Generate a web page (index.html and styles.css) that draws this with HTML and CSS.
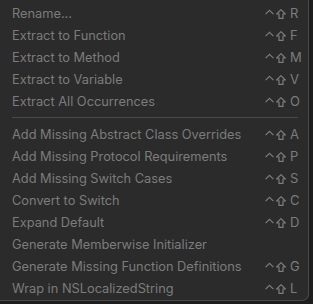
FILE: index.html
```html
<!DOCTYPE html>
<html>
<head>
<meta charset="utf-8">
<link rel="stylesheet" href="styles.css">
</head>
<body>
<div class="menu">
  <div class="group">
    <div class="item"><span class="label">Rename...</span><span class="key"><svg class="ctrl" viewBox="0 0 9 10"><polyline points="0.6,5.2 4.5,1.3 8.4,5.2"/></svg><svg class="shift" viewBox="0 0 10 10"><path d="M5 0.7 L9.3 5 H7 V9.4 H3 V5 H0.7 Z"/></svg><span class="k">R</span></span></div>
    <div class="item"><span class="label">Extract to Function</span><span class="key"><svg class="ctrl" viewBox="0 0 9 10"><polyline points="0.6,5.2 4.5,1.3 8.4,5.2"/></svg><svg class="shift" viewBox="0 0 10 10"><path d="M5 0.7 L9.3 5 H7 V9.4 H3 V5 H0.7 Z"/></svg><span class="k">F</span></span></div>
    <div class="item"><span class="label">Extract to Method</span><span class="key"><svg class="ctrl" viewBox="0 0 9 10"><polyline points="0.6,5.2 4.5,1.3 8.4,5.2"/></svg><svg class="shift" viewBox="0 0 10 10"><path d="M5 0.7 L9.3 5 H7 V9.4 H3 V5 H0.7 Z"/></svg><span class="k">M</span></span></div>
    <div class="item"><span class="label">Extract to Variable</span><span class="key"><svg class="ctrl" viewBox="0 0 9 10"><polyline points="0.6,5.2 4.5,1.3 8.4,5.2"/></svg><svg class="shift" viewBox="0 0 10 10"><path d="M5 0.7 L9.3 5 H7 V9.4 H3 V5 H0.7 Z"/></svg><span class="k">V</span></span></div>
    <div class="item"><span class="label">Extract All Occurrences</span><span class="key"><svg class="ctrl" viewBox="0 0 9 10"><polyline points="0.6,5.2 4.5,1.3 8.4,5.2"/></svg><svg class="shift" viewBox="0 0 10 10"><path d="M5 0.7 L9.3 5 H7 V9.4 H3 V5 H0.7 Z"/></svg><span class="k">O</span></span></div>
  </div>
  <div class="sep"></div>
  <div class="group">
    <div class="item"><span class="label">Add Missing Abstract Class Overrides</span><span class="key"><svg class="ctrl" viewBox="0 0 9 10"><polyline points="0.6,5.2 4.5,1.3 8.4,5.2"/></svg><svg class="shift" viewBox="0 0 10 10"><path d="M5 0.7 L9.3 5 H7 V9.4 H3 V5 H0.7 Z"/></svg><span class="k">A</span></span></div>
    <div class="item"><span class="label">Add Missing Protocol Requirements</span><span class="key"><svg class="ctrl" viewBox="0 0 9 10"><polyline points="0.6,5.2 4.5,1.3 8.4,5.2"/></svg><svg class="shift" viewBox="0 0 10 10"><path d="M5 0.7 L9.3 5 H7 V9.4 H3 V5 H0.7 Z"/></svg><span class="k">P</span></span></div>
    <div class="item"><span class="label">Add Missing Switch Cases</span><span class="key"><svg class="ctrl" viewBox="0 0 9 10"><polyline points="0.6,5.2 4.5,1.3 8.4,5.2"/></svg><svg class="shift" viewBox="0 0 10 10"><path d="M5 0.7 L9.3 5 H7 V9.4 H3 V5 H0.7 Z"/></svg><span class="k">S</span></span></div>
    <div class="item"><span class="label">Convert to Switch</span><span class="key"><svg class="ctrl" viewBox="0 0 9 10"><polyline points="0.6,5.2 4.5,1.3 8.4,5.2"/></svg><svg class="shift" viewBox="0 0 10 10"><path d="M5 0.7 L9.3 5 H7 V9.4 H3 V5 H0.7 Z"/></svg><span class="k">C</span></span></div>
    <div class="item"><span class="label">Expand Default</span><span class="key"><svg class="ctrl" viewBox="0 0 9 10"><polyline points="0.6,5.2 4.5,1.3 8.4,5.2"/></svg><svg class="shift" viewBox="0 0 10 10"><path d="M5 0.7 L9.3 5 H7 V9.4 H3 V5 H0.7 Z"/></svg><span class="k">D</span></span></div>
    <div class="item"><span class="label">Generate Memberwise Initializer</span><span class="key"></span></div>
    <div class="item"><span class="label">Generate Missing Function Definitions</span><span class="key"><svg class="ctrl" viewBox="0 0 9 10"><polyline points="0.6,5.2 4.5,1.3 8.4,5.2"/></svg><svg class="shift" viewBox="0 0 10 10"><path d="M5 0.7 L9.3 5 H7 V9.4 H3 V5 H0.7 Z"/></svg><span class="k">G</span></span></div>
    <div class="item"><span class="label">Wrap in NSLocalizedString</span><span class="key"><svg class="ctrl" viewBox="0 0 9 10"><polyline points="0.6,5.2 4.5,1.3 8.4,5.2"/></svg><svg class="shift" viewBox="0 0 10 10"><path d="M5 0.7 L9.3 5 H7 V9.4 H3 V5 H0.7 Z"/></svg><span class="k">L</span></span></div>
  </div>
</div>
</body>
</html>
```
FILE: styles.css
```css
html, body {
  margin: 0;
  padding: 0;
  background: #1e1e1e;
  width: 313px;
  height: 304px;
  overflow: hidden;
}
.menu {
  width: 309px;
  height: 301px;
  background: #2b2b2b;
  border-right: 1px solid #4a4a4a;
  border-bottom: 1px solid #4a4a4a;
  border-bottom-right-radius: 7px;
  padding-top: 2px;
  box-sizing: border-box;
  font-family: "Inter", "Liberation Sans", sans-serif;
  font-size: 12.8px;
  color: #7c7c7c;
}
.item {
  height: 22px;
  display: flex;
  align-items: center;
  justify-content: space-between;
  padding: 0 9px 0 12px;
}
.key {
  display: flex;
  align-items: center;
}
.key svg {
  fill: none;
  stroke: #7c7c7c;
  stroke-width: 1.2;
  stroke-linejoin: miter;
  margin-top: 2px;
}
.ctrl {
  width: 9px;
  height: 10px;
}
.shift {
  width: 10px;
  height: 10px;
  margin-left: 2px;
}
.k {
  width: 9px;
  margin-left: 4px;
  font-size: 13px;
}
.sep {
  height: 1px;
  background: #4a4a4a;
  margin: 5px 10px 5px 12px;
}
```
